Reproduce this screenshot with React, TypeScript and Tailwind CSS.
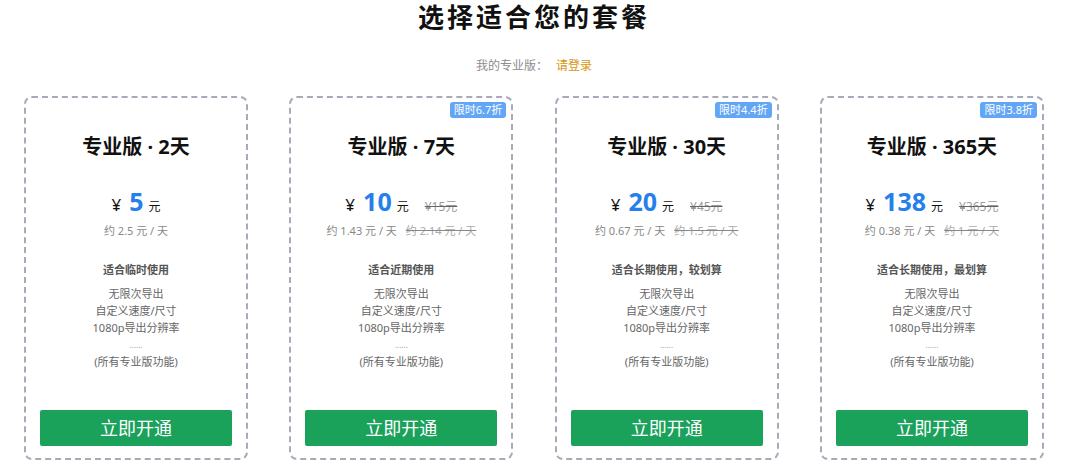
const plans = [
  {
    days: "2",
    price: "5",
    orig: "",
    perDay: "约 2.5 元 / 天",
    origPerDay: "",
    badge: "",
    fit: "适合临时使用",
  },
  {
    days: "7",
    price: "10",
    orig: "¥15元",
    perDay: "约 1.43 元 / 天",
    origPerDay: "约 2.14 元 / 天",
    badge: "限时6.7折",
    fit: "适合近期使用",
  },
  {
    days: "30",
    price: "20",
    orig: "¥45元",
    perDay: "约 0.67 元 / 天",
    origPerDay: "约 1.5 元 / 天",
    badge: "限时4.4折",
    fit: "适合长期使用，较划算",
  },
  {
    days: "365",
    price: "138",
    orig: "¥365元",
    perDay: "约 0.38 元 / 天",
    origPerDay: "约 1 元 / 天",
    badge: "限时3.8折",
    fit: "适合长期使用，最划算",
  },
];

const features = ["无限次导出", "自定义速度/尺寸", "1080p导出分辨率", "......", "(所有专业版功能)"];

type Plan = (typeof plans)[number];

const PlanCard = ({ plan }: { plan: Plan }) => (
  <div className="relative w-[224px] h-[364px] rounded-lg border-2 border-dashed border-[#a8aab8] bg-white flex flex-col items-center">
    {/* 限时折扣角标 */}
    {plan.badge && (
      <div className="absolute top-[4px] right-[5px] h-[16px] px-[4px] rounded-[3px] bg-[#63a6f6] text-white text-[11px] leading-[16px]">
        {plan.badge}
      </div>
    )}

    {/* 套餐名 */}
    <div className="mt-[35px] text-[20px] leading-[28px] font-bold text-[#111]">
      专业版 · {plan.days}天
    </div>

    {/* 价格 */}
    <div className="mt-[22px] h-[32px] flex items-baseline text-[#111]">
      <span className="text-[17px]">¥</span>
      <span className="ml-[8px] text-[25px] font-bold text-[#2680eb]">{plan.price}</span>
      <span className="ml-[5px] text-[12px]">元</span>
      {plan.orig && (
        <span className="ml-[16px] text-[12px] text-[#999] line-through decoration-[#666]">{plan.orig}</span>
      )}
    </div>

    <div className="mt-[7px] text-[11px] leading-[18px] text-[#888]">
      {plan.perDay}
      {plan.origPerDay && <span className="ml-[9px] line-through text-[#aaa] decoration-[#888]">{plan.origPerDay}</span>}
    </div>

    {/* 适用说明 */}
    <div className="mt-[21px] text-[11px] leading-[18px] font-bold text-[#555]">{plan.fit}</div>
    <div className="mt-[6px] flex flex-col items-center text-[11px] leading-[17px] text-[#666]">
      {features.map((f, i) => (
        <div key={i} className={i === 3 ? "text-[8px] text-[#999]" : ""}>
          {f}
        </div>
      ))}
    </div>

    {/* 开通按钮 */}
    <button className="mt-auto mb-[12px] w-[192px] h-[36px] rounded-[2px] bg-[#1aa15a] text-white text-[18px]">
      立即开通
    </button>
  </div>
);

export default function App() {
  return (
    <div
      className="w-[1068px] h-[475px] bg-white flex flex-col items-center"
      style={{ fontFamily: '"Noto Sans", "Noto Sans CJK SC", sans-serif' }}
    >
      <h1 className="mt-[2px] text-[26px] leading-[30px] font-bold tracking-[3px] text-[#111]">选择适合您的套餐</h1>
      <div className="mt-[26px] text-[12px] leading-[16px]">
        <span className="text-[#8c8c8c]">我的专业版：</span>
        <span className="ml-[8px] text-[#d9950f]">请登录</span>
      </div>
      <div className="mt-[22px] flex gap-[41.3px]">
        {plans.map((p) => (
          <PlanCard key={p.days} plan={p} />
        ))}
      </div>
    </div>
  );
}
